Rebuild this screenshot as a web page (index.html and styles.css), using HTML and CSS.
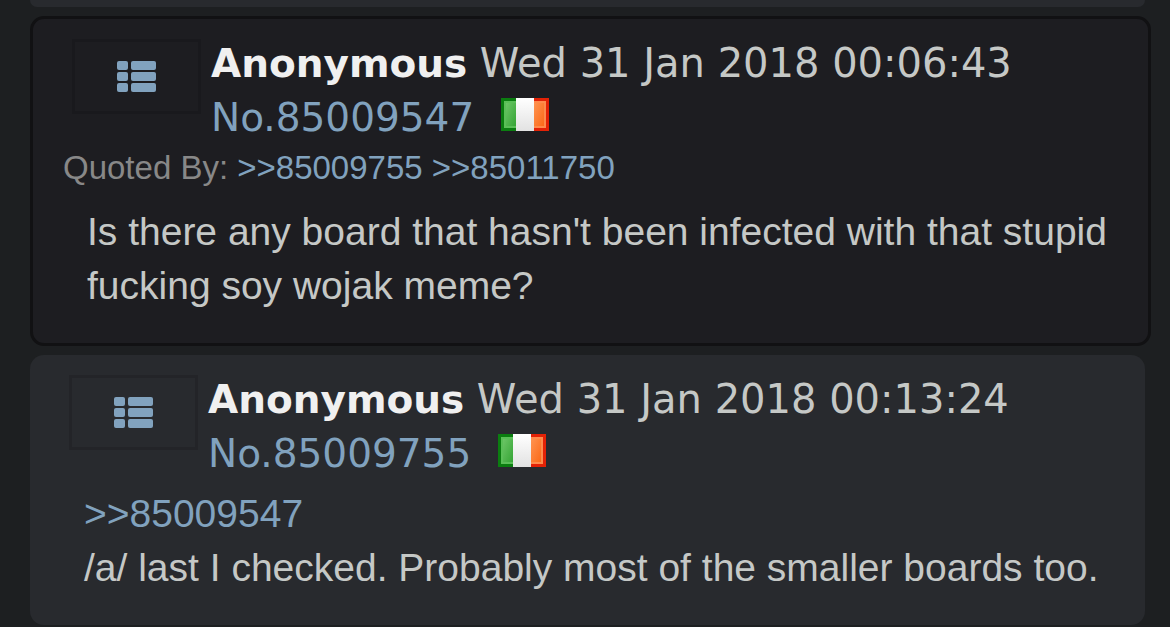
FILE: index.html
```
<!DOCTYPE html>
<html lang="en">
<head>
  <meta charset="UTF-8" />
  <meta name="viewport" content="width=device-width, initial-scale=1.0"/>
  <title>Thread</title>
  <link rel="stylesheet" href="styles.css">
</head>
<body>
  <!-- shared icons -->
  <svg width="0" height="0" class="sprites" aria-hidden="true">
    <defs>
      <linearGradient id="green" x1="0" y1="0" x2="1" y2="1">
        <stop offset="0" stop-color="#6cc566"/>
        <stop offset="1" stop-color="#35a535"/>
      </linearGradient>
      <linearGradient id="white" x1="0" y1="0" x2="0" y2="1">
        <stop offset="0" stop-color="#ffffff"/>
        <stop offset="1" stop-color="#e2e2e2"/>
      </linearGradient>
      <linearGradient id="orange" x1="0" y1="0" x2="1" y2="1">
        <stop offset="0" stop-color="#ff9350"/>
        <stop offset="1" stop-color="#fb6a18"/>
      </linearGradient>
      <symbol id="list" viewBox="0 0 39 31">
        <rect x="0" y="0" width="11" height="9" rx="2"/>
        <rect x="14" y="0" width="25" height="9" rx="2"/>
        <rect x="0" y="11" width="11" height="9" rx="2"/>
        <rect x="14" y="11" width="25" height="9" rx="2"/>
        <rect x="0" y="22" width="11" height="9" rx="2"/>
        <rect x="14" y="22" width="25" height="9" rx="2"/>
      </symbol>
      <symbol id="ireland" viewBox="0 0 48 33">
        <rect width="15" height="33" fill="#0b7d10"/>
        <rect x="3" y="3" width="12" height="27" fill="#5abf57"/>
        <rect x="5" y="5" width="10" height="23" fill="url(#green)"/>
        <rect x="15" width="18" height="33" fill="url(#white)"/>
        <rect x="33" width="15" height="33" fill="#e32206"/>
        <rect x="33" y="3" width="12" height="27" fill="#ff8a4c"/>
        <rect x="33" y="5" width="10" height="23" fill="url(#orange)"/>
      </symbol>
    </defs>
  </svg>

  <main class="thread">
    <div class="post previous"></div>

    <article class="post highlight" id="p85009547">
      <header class="post-head">
        <button class="menu" type="button" aria-label="Post menu">
          <svg class="list-icon" aria-hidden="true"><use href="#list"/></svg>
        </button>
        <div class="post-data">
          <strong class="author">Anonymous</strong>
          <time datetime="2018-01-31T00:06:43">Wed 31 Jan 2018 00:06:43</time>
          <a href="#p85009547">No.85009547</a>
          <svg class="flag" role="img" aria-label="Ireland"><use href="#ireland"/></svg>
        </div>
      </header>
      <div class="backlinks">Quoted By: <a href="#p85009755">&gt;&gt;85009755</a> <a href="#p85011750">&gt;&gt;85011750</a></div>
      <div class="text">Is there any board that hasn't been infected with that stupid fucking soy wojak meme?</div>
    </article>

    <article class="post" id="p85009755">
      <header class="post-head">
        <button class="menu" type="button" aria-label="Post menu">
          <svg class="list-icon" aria-hidden="true"><use href="#list"/></svg>
        </button>
        <div class="post-data">
          <strong class="author">Anonymous</strong>
          <time datetime="2018-01-31T00:13:24">Wed 31 Jan 2018 00:13:24</time>
          <a href="#p85009755">No.85009755</a>
          <svg class="flag" role="img" aria-label="Ireland"><use href="#ireland"/></svg>
        </div>
      </header>
      <div class="text"><a href="#p85009547">&gt;&gt;85009547</a><br>/a/ last I checked. Probably most of the smaller boards too.</div>
    </article>
  </main>
</body>
</html>
```
FILE: styles.css
```
body {
  margin: 0;
  background: #1d1f21;
  color: #c5c8c6;
  font-family: "Liberation Sans", Arial, sans-serif;
}
a {
  color: #81a2be;
  text-decoration: none;
}
.sprites {
  display: block;
}
.thread {
  display: flex;
  flex-direction: column;
  gap: 9px;
  padding: 0 25px 0 30px;
}
.post {
  background: #282a2e;
  border-radius: 14px;
  padding: 17px 32px 30px 30px;
}
.previous {
  height: 7px;
  padding: 0;
  border-radius: 0 0 14px 14px;
}
.highlight {
  background: #1d1d21;
  border: 3px solid #111113;
  margin-right: -6px;
}
.post-head {
  display: flex;
  padding-left: 9px;
  gap: 10px;
}
.menu {
  display: flex;
  align-items: center;
  justify-content: center;
  flex: none;
  box-sizing: border-box;
  width: 129px;
  height: 75px;
  margin-top: 3px;
  padding: 0;
  background: none;
  border: 3px solid rgba(0, 0, 0, 0.12);
  cursor: pointer;
}
.list-icon {
  width: 39px;
  height: 31px;
  fill: #81a2be;
}
.post-data {
  font-family: "DejaVu Sans", Verdana, sans-serif;
  font-size: 39px;
  line-height: 54px;
}
.post-data time {
  font-size: 40px;
}
.author {
  color: #f0f0f0;
}
.flag {
  width: 48px;
  height: 33px;
  margin-left: 14px;
}
.backlinks {
  padding-bottom: 8px;
  color: #888;
  font-size: 33px;
  line-height: 46px;
}
.text {
  padding: 6px 0 0 24px;
  font-size: 39px;
  line-height: 54px;
}
```
